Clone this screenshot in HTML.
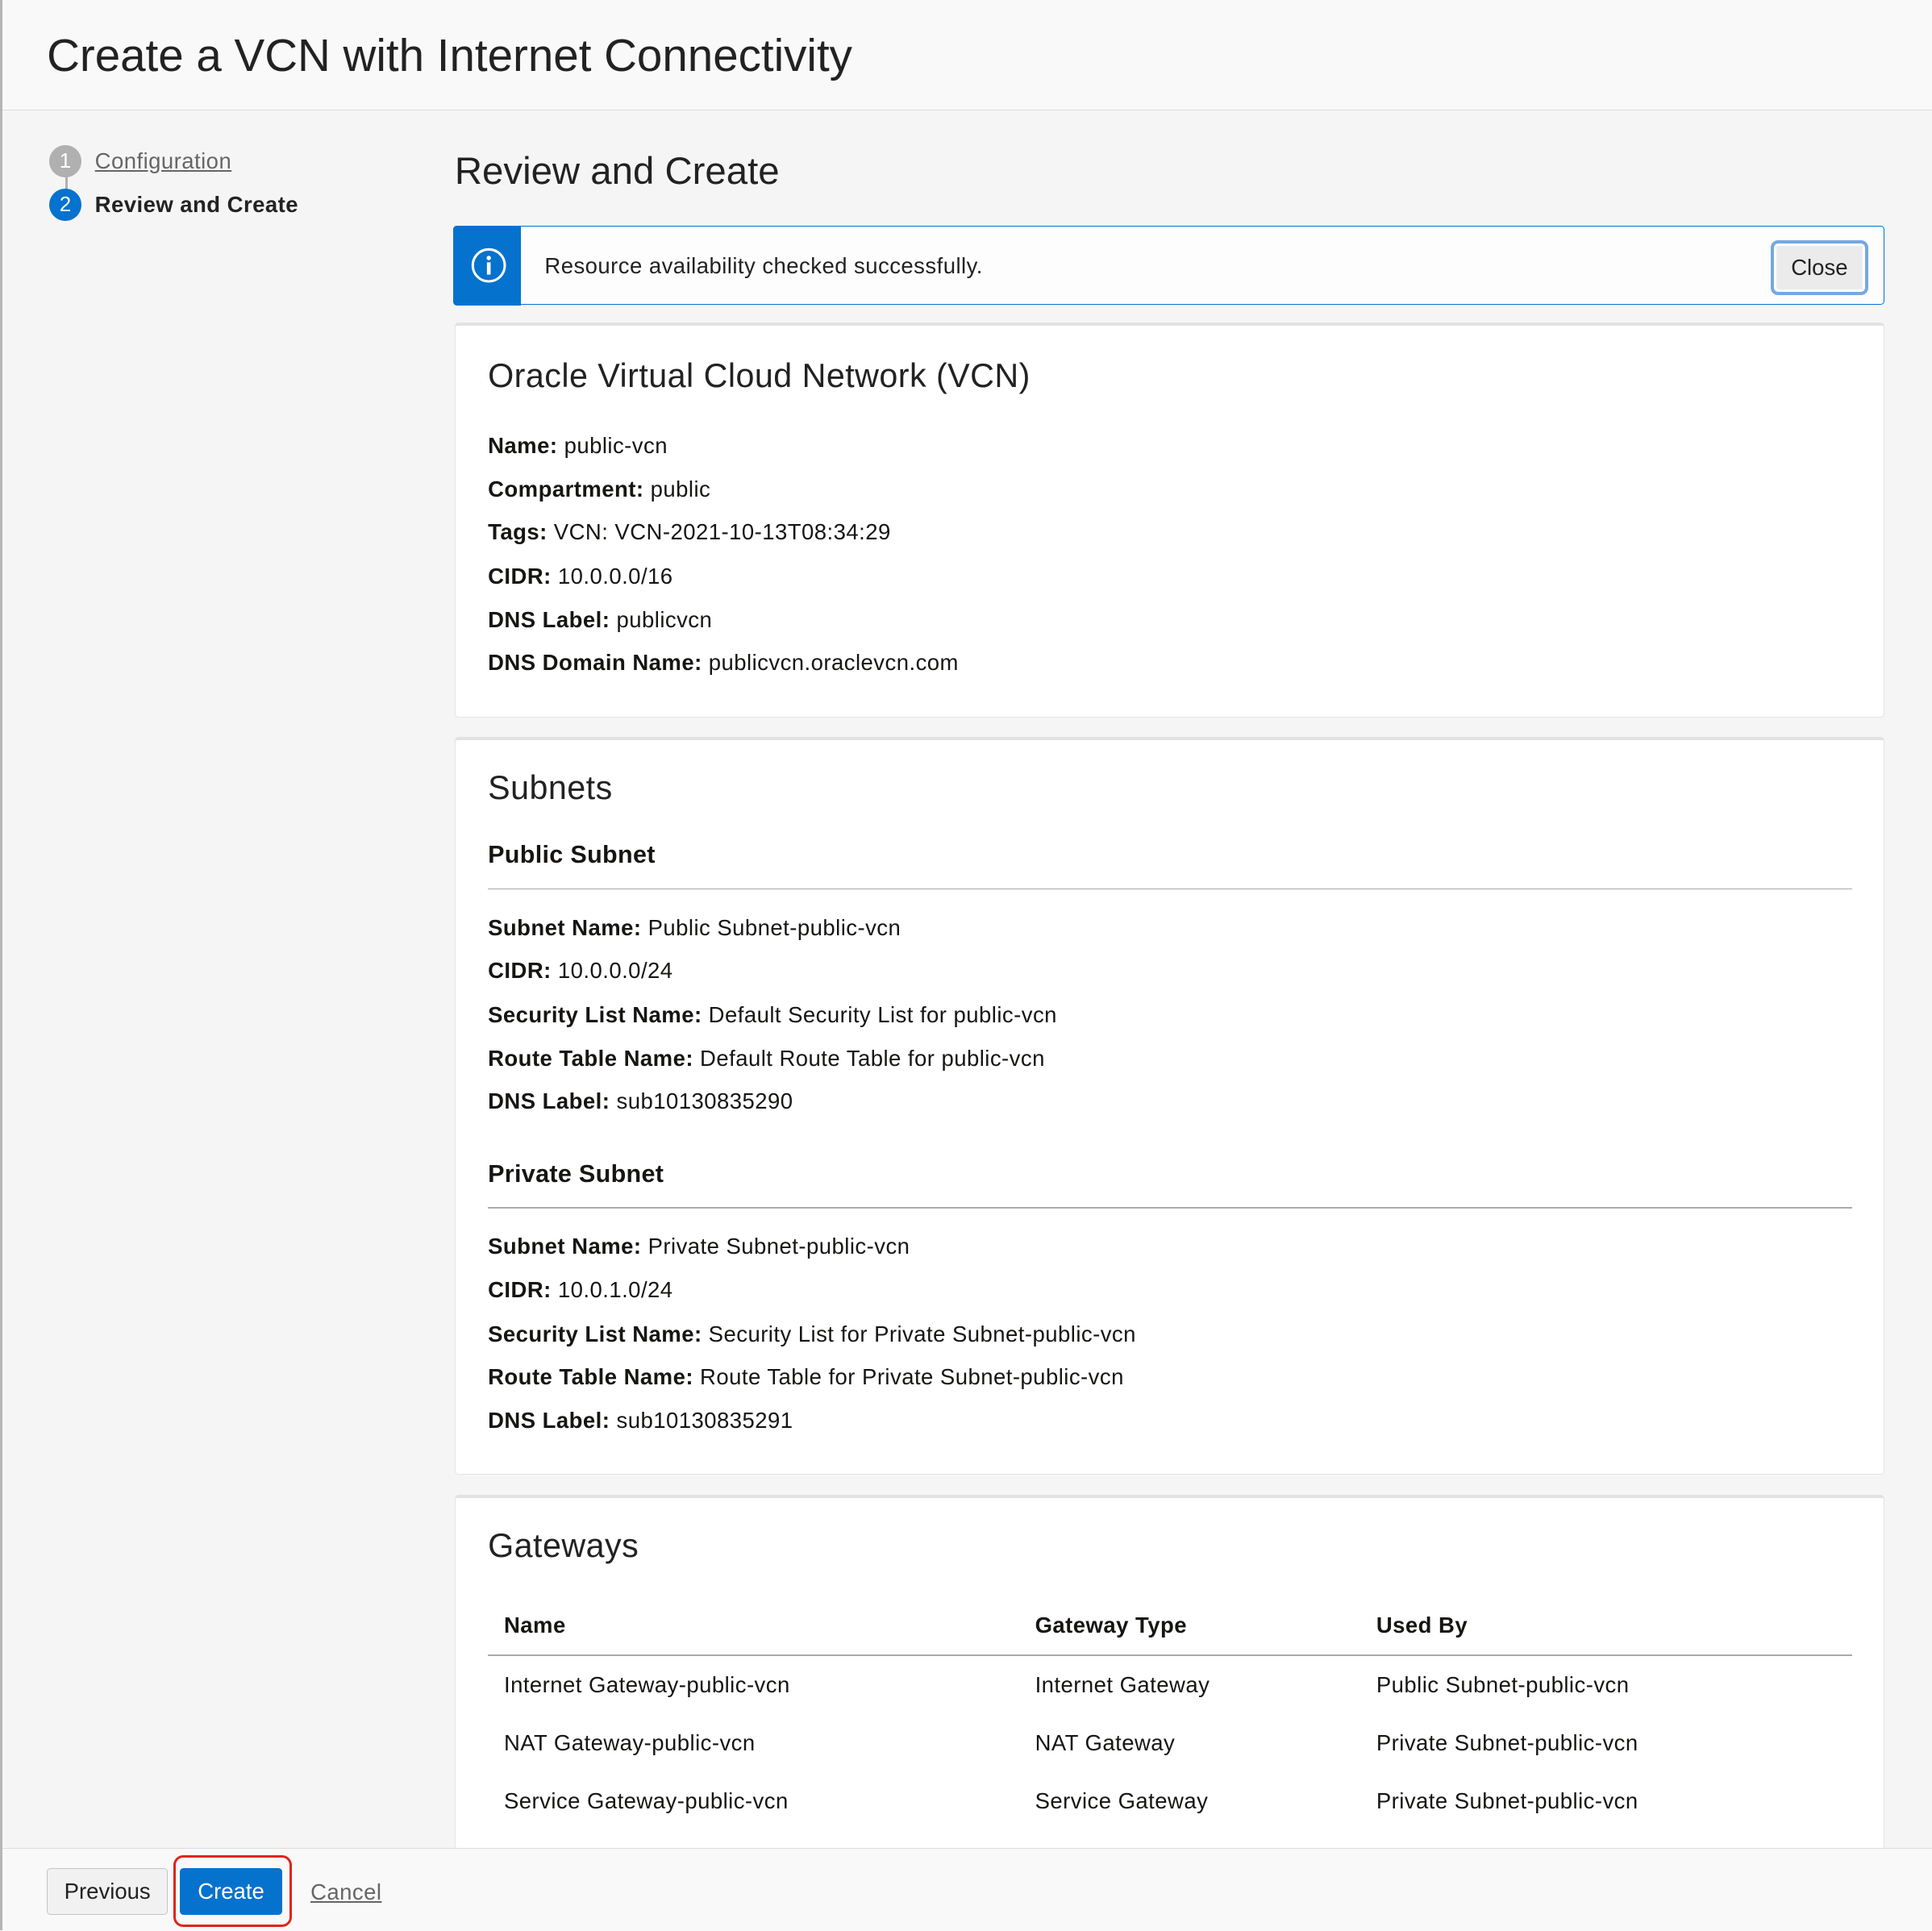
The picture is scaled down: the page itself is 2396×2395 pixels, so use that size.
<!DOCTYPE html>
<html><head><meta charset="utf-8"><style>
html,body{margin:0;padding:0}
body{width:1568px;height:1567px;zoom:1.52806;background:#f5f5f5;font-family:"Liberation Sans",Arial,sans-serif;color:#161513;position:relative;overflow:hidden}
.a{position:absolute;white-space:nowrap}
.t{height:30px;line-height:30px;font-size:18px;letter-spacing:0.3px}
.h{font-size:27px;line-height:36px;color:#222;letter-spacing:0.3px}
b{font-weight:bold}
.card{position:absolute;left:369px;width:1159px;background:#fff;border:1px solid #e4e4e4;border-top:3px solid #e2e2e4;border-radius:3px}
.hr{position:absolute;left:396px;width:1107px;height:1px;background:#aaa}
</style></head><body>
<div class="a" style="left:0;top:0;width:1568px;height:89px;background:#f9f9f9;border-bottom:1px solid #dcdcdc"></div>
<div class="a" style="left:0;top:0;width:2px;height:1567px;background:#b5b5b5"></div>
<div class="a" style="left:38px;top:23px;font-size:37px;line-height:44px;color:#222">Create a VCN with Internet Connectivity</div>

<div class="a" style="left:53px;top:140px;width:2px;height:20px;background:#b0b0b0"></div>
<div class="a" style="left:40px;top:118px;width:26px;height:26px;border-radius:50%;background:#b0b0b0;color:#fff;font-size:17px;line-height:26px;text-align:center">1</div>
<div class="a" style="left:40px;top:153px;width:26px;height:26px;border-radius:50%;background:#0572ce;color:#fff;font-size:17px;line-height:26px;text-align:center">2</div>
<div class="a t" style="left:77px;top:116px;color:#666;text-decoration:underline">Configuration</div>
<div class="a t" style="left:77px;top:151px;font-weight:bold;color:#222">Review and Create</div>

<div class="a" style="left:369px;top:119px;font-size:31px;line-height:40px;color:#222">Review and Create</div>

<div class="a" style="left:368px;top:183px;width:1160px;height:63px;border:1px solid #0572ce;border-radius:3px;background:#fdfdfd"></div>
<div class="a" style="left:368px;top:183px;width:55px;height:65px;background:#0572ce;border-radius:3px 0 0 3px"></div>
<svg class="a" style="left:382px;top:201px" width="29" height="29" viewBox="0 0 29 29"><circle cx="14.5" cy="14.5" r="13" fill="none" stroke="#fff" stroke-width="2"/><circle cx="14.5" cy="8.5" r="1.8" fill="#fff"/><rect x="13" y="12" width="3" height="10" fill="#fff"/></svg>
<div class="a t" style="left:442px;top:201px;color:#222">Resource availability checked successfully.</div>
<div class="a" style="left:1437px;top:195px;width:74px;height:39px;border:3px solid #74a8e2;border-radius:6px;background:#ebebeb;box-shadow:inset 0 0 0 2px #fff;font-size:18px;line-height:39px;text-align:center;color:#222">Close</div>

<div class="card" style="top:262px;height:317px"></div>
<div class="a h" style="left:396px;top:287px">Oracle Virtual Cloud Network (VCN)</div>
<div class="a t" style="left:396px;top:347px"><b>Name:</b> public-vcn</div>
<div class="a t" style="left:396px;top:382px"><b>Compartment:</b> public</div>
<div class="a t" style="left:396px;top:417px"><b>Tags:</b> VCN: VCN-2021-10-13T08:34:29</div>
<div class="a t" style="left:396px;top:453px"><b>CIDR:</b> 10.0.0.0/16</div>
<div class="a t" style="left:396px;top:488px"><b>DNS Label:</b> publicvcn</div>
<div class="a t" style="left:396px;top:523px"><b>DNS Domain Name:</b> publicvcn.oraclevcn.com</div>

<div class="card" style="top:598px;height:596px"></div>
<div class="a h" style="left:396px;top:622px">Subnets</div>
<div class="a" style="left:396px;top:680px;font-size:20px;line-height:28px;font-weight:bold;letter-spacing:0.2px">Public Subnet</div>
<div class="hr" style="top:721px"></div>
<div class="a t" style="left:396px;top:738px"><b>Subnet Name:</b> Public Subnet-public-vcn</div>
<div class="a t" style="left:396px;top:773px"><b>CIDR:</b> 10.0.0.0/24</div>
<div class="a t" style="left:396px;top:809px"><b>Security List Name:</b> Default Security List for public-vcn</div>
<div class="a t" style="left:396px;top:844px"><b>Route Table Name:</b> Default Route Table for public-vcn</div>
<div class="a t" style="left:396px;top:879px"><b>DNS Label:</b> sub10130835290</div>
<div class="a" style="left:396px;top:939px;font-size:20px;line-height:28px;font-weight:bold;letter-spacing:0.2px">Private Subnet</div>
<div class="hr" style="top:980px"></div>
<div class="a t" style="left:396px;top:997px"><b>Subnet Name:</b> Private Subnet-public-vcn</div>
<div class="a t" style="left:396px;top:1032px"><b>CIDR:</b> 10.0.1.0/24</div>
<div class="a t" style="left:396px;top:1068px"><b>Security List Name:</b> Security List for Private Subnet-public-vcn</div>
<div class="a t" style="left:396px;top:1103px"><b>Route Table Name:</b> Route Table for Private Subnet-public-vcn</div>
<div class="a t" style="left:396px;top:1138px"><b>DNS Label:</b> sub10130835291</div>

<div class="card" style="top:1213px;height:320px"></div>
<div class="a h" style="left:396px;top:1237px">Gateways</div>
<div class="a t" style="left:409px;top:1304px;font-weight:bold">Name</div>
<div class="a t" style="left:840px;top:1304px;font-weight:bold">Gateway Type</div>
<div class="a t" style="left:1117px;top:1304px;font-weight:bold">Used By</div>
<div class="hr" style="top:1343px"></div>
<div class="a t" style="left:409px;top:1353px">Internet Gateway-public-vcn</div>
<div class="a t" style="left:840px;top:1353px">Internet Gateway</div>
<div class="a t" style="left:1117px;top:1353px">Public Subnet-public-vcn</div>
<div class="a t" style="left:409px;top:1400px">NAT Gateway-public-vcn</div>
<div class="a t" style="left:840px;top:1400px">NAT Gateway</div>
<div class="a t" style="left:1117px;top:1400px">Private Subnet-public-vcn</div>
<div class="a t" style="left:409px;top:1447px">Service Gateway-public-vcn</div>
<div class="a t" style="left:840px;top:1447px">Service Gateway</div>
<div class="a t" style="left:1117px;top:1447px">Private Subnet-public-vcn</div>

<div class="a" style="left:2px;top:1500px;width:1566px;height:67px;background:#f9f9f9;border-top:1px solid #dcdcdc"></div>
<div class="a" style="left:38px;top:1516px;width:97px;height:37px;border:1px solid #c4c4c4;border-radius:3px;background:#f1f1f1;font-size:18px;line-height:37px;text-align:center;color:#222">Previous</div>
<div class="a" style="left:141px;top:1506px;width:92px;height:54px;border:2px solid #e0241a;border-radius:8px"></div>
<div class="a" style="left:146px;top:1516px;width:83px;height:38px;background:#0572ce;border-radius:3px;font-size:18px;line-height:38px;text-align:center;color:#fff">Create</div>
<div class="a t" style="left:252px;top:1521px;color:#666;text-decoration:underline">Cancel</div>
</body></html>
